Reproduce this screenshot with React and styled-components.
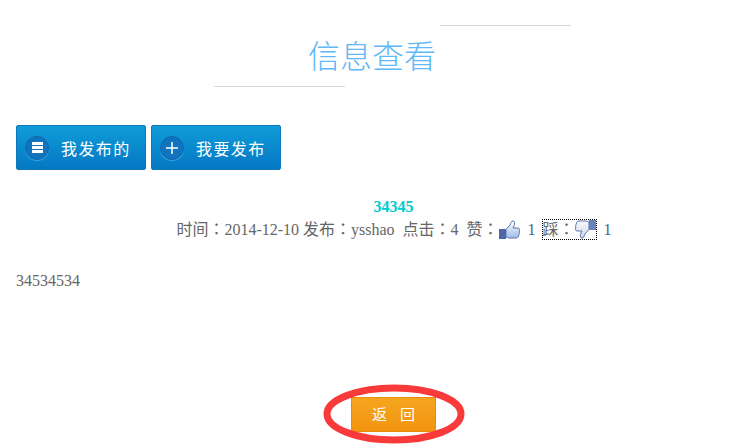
import React from 'react';
import styled, { createGlobalStyle } from 'styled-components';

const serif = '"Liberation Serif", "Noto Sans CJK TC", serif';
const sans = '"Liberation Sans", "Noto Sans CJK SC", sans-serif';

const GlobalStyle = createGlobalStyle`
  html, body {
    margin: 0;
    background: #fff;
    overflow: hidden;
  }
`;

const Page = styled.div`
  position: relative;
  width: 744px;
  height: 444px;
  overflow: hidden;
  font-family: ${serif};
  font-size: 16px;
  color: #666;
`;

const TitleBlock = styled.div`
  position: relative;
  height: 125px;
  padding-top: 38px;
  box-sizing: border-box;
  text-align: center;
`;

const Title = styled.h1`
  margin: 0;
  font-family: ${sans};
  font-size: 32px;
  line-height: 38px;
  font-weight: 300;
  color: #5fb8f8;
`;

const Rule = styled.span`
  position: absolute;
  left: ${(props) => props.left}px;
  top: ${(props) => props.top}px;
  width: 131px;
  height: 1px;
  background: #d8d8d8;
`;

const Toolbar = styled.div`
  display: flex;
  gap: 5px;
  padding-left: 16px;
`;

const ToolButton = styled.a`
  display: flex;
  align-items: center;
  box-sizing: border-box;
  width: 130px;
  height: 45px;
  padding-left: 8px;
  gap: 12px;
  border: 1px solid #0b79b9;
  border-radius: 2px;
  background: linear-gradient(#0f9cd8, #0578c4);
  color: #fff;
  font-family: ${sans};
  font-size: 16px;
  letter-spacing: 1.4px;
`;

const IconDisc = styled.span`
  display: flex;
  align-items: center;
  justify-content: center;
  box-sizing: border-box;
  width: 24px;
  height: 24px;
  border-radius: 50%;
  background: #0f74bd;
  border: 1px solid #0c68ac;
  box-shadow: 0 1px 0 #38a2dc;
`;

const Info = styled.div`
  margin-top: 28px;
  text-align: center;
`;

const InfoTitle = styled.div`
  height: 18px;
  padding-left: 43px;
  font-size: 16px;
  line-height: 18px;
  font-weight: bold;
  color: #00cccc;
`;

const Meta = styled.div`
  display: flex;
  align-items: center;
  justify-content: center;
  height: 23px;
  margin-top: 2px;
  padding-left: 51px;
  white-space: pre;
  line-height: 23px;
`;

const Vote = styled.span`
  display: inline-flex;
  align-items: center;
  height: 19px;
  outline: ${(props) => (props.focused ? '1px dotted #000' : 'none')};
`;

const Count = styled.span`
  color: #44648c;
  padding: 0 7px 0 8px;
`;

const Body = styled.div`
  margin-top: 30px;
  padding-left: 16px;
  line-height: 20px;
`;

const BackRow = styled.div`
  display: flex;
  justify-content: center;
  margin-top: 106px;
  padding-left: 43px;
`;

const BackButton = styled.a`
  display: flex;
  align-items: center;
  justify-content: center;
  box-sizing: border-box;
  width: 85px;
  height: 35px;
  gap: 13px;
  padding-bottom: 2px;
  border: 1px solid #e98a0a;
  background: linear-gradient(#f5a51f, #f29410);
  color: #fff;
  font-family: ${sans};
  font-size: 15px;
`;

const Annotation = styled.svg`
  position: absolute;
  left: 320px;
  top: 380px;
`;

const ListIcon = () => (
  <svg width="11" height="11" viewBox="0 0 11 11">
    <path d="M0 0h11v3H0zM0 4h11v3H0zM0 8h11v3H0z" fill="#fff" />
  </svg>
);

const PlusIcon = () => (
  <svg width="12" height="12" viewBox="0 0 12 12">
    <path d="M6 0v12M0 6h12" stroke="#fff" strokeWidth="1.5" fill="none" />
  </svg>
);

const ThumbIcon = ({ down }) => (
  <svg width="21" height="19" viewBox="0 0 21 19" style={down ? { transform: 'rotate(180deg)' } : undefined}>
    <defs>
      <linearGradient id={down ? 'handDown' : 'handUp'} x1="0" y1="0" x2="0" y2="1">
        <stop offset="0" stopColor={down ? '#cfd8e8' : '#ffffff'} />
        <stop offset="1" stopColor={down ? '#f7f9fb' : '#9dbce6'} />
      </linearGradient>
    </defs>
    <path d="M0 9h7v10H0z" fill={down ? '#6a84be' : '#4d66a8'} />
    <path
      d="M7 9.5l4-4.5c1-2 1-4 3-4s2 3 1 5l-1 2h5c2 0 2 3 1 4 1 1 0 3-.5 3 .5 1-.5 3-2.5 3h-7c-1 0-2-1-3-1z"
      fill={`url(#${down ? 'handDown' : 'handUp'})`}
      stroke="#5a74ad"
      strokeWidth="1"
    />
  </svg>
);

const App = () => (
  <Page>
    <GlobalStyle />
    <TitleBlock>
      <Rule left={440} top={25} />
      <Title>信息查看</Title>
      <Rule left={214} top={86} />
    </TitleBlock>
    <Toolbar>
      <ToolButton>
        <IconDisc><ListIcon /></IconDisc>
        我发布的
      </ToolButton>
      <ToolButton>
        <IconDisc><PlusIcon /></IconDisc>
        我要发布
      </ToolButton>
    </Toolbar>
    <Info>
      <InfoTitle>34345</InfoTitle>
      <Meta>
        时间：2014-12-10 发布：ysshao  点击：4  赞：
        <ThumbIcon />
        <Count>1</Count>
        <Vote focused>踩：<ThumbIcon down /></Vote>
        <Count>1</Count>
      </Meta>
    </Info>
    <Body>34534534</Body>
    <BackRow>
      <BackButton>
        <span>返</span>
        <span>回</span>
      </BackButton>
    </BackRow>
    <Annotation width="150" height="64" viewBox="0 0 150 64">
      <ellipse cx="74" cy="34" rx="67" ry="26" fill="none" stroke="#f93a3a" strokeWidth="7" />
    </Annotation>
  </Page>
);

export default App;
